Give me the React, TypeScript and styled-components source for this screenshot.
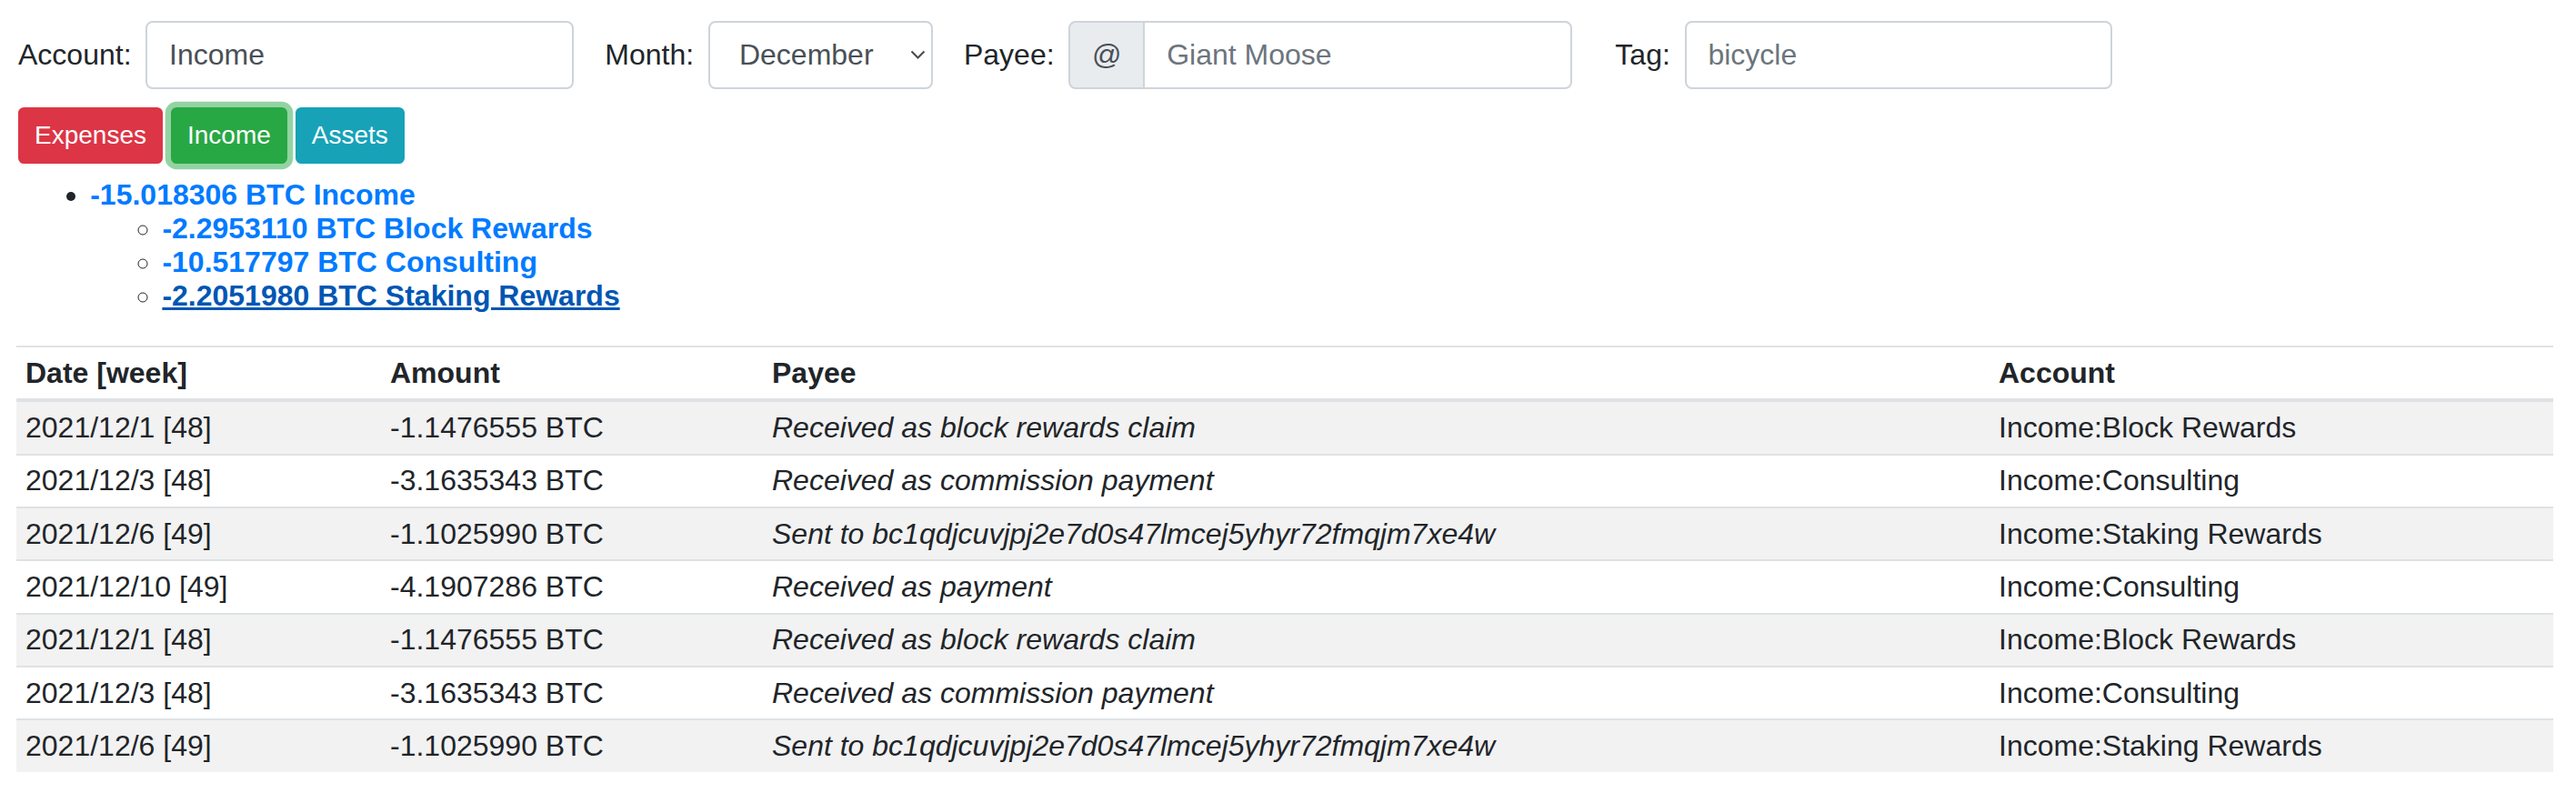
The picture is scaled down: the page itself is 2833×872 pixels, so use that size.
import React from "react";
import styled, { createGlobalStyle } from "styled-components";

const GlobalStyle = createGlobalStyle`
  html, body {
    margin: 0;
    padding: 0;
    background: #ffffff;
  }
  body {
    font-family: "Liberation Sans", Arial, Helvetica, sans-serif;
    font-size: 32px;
    line-height: normal;
    color: #212529;
  }
  * { box-sizing: border-box; }
`;

const Page = styled.div`
  padding: 22.7px 25px 0 20px;
`;

const FormRow = styled.div`
  display: flex;
  align-items: center;
  height: 75.2px;
`;

const FormGroup = styled.div<{ $gap: number }>`
  display: flex;
  align-items: center;
  margin-right: ${(p) => p.$gap}px;
`;

const Label = styled.label`
  margin-right: 15.8px;
  color: #212529;
  white-space: nowrap;
`;

const TextInput = styled.input<{ $w: number }>`
  width: ${(p) => p.$w}px;
  height: 75.2px;
  padding: 0 23.8px;
  font: inherit;
  color: #495057;
  background: #fff;
  border: 2px solid #ced4da;
  border-radius: 7.9px;
  outline: none;
  &::placeholder {
    color: #6c757d;
    opacity: 1;
  }
`;

const SelectWrap = styled.div`
  position: relative;
  width: 247px;
  height: 75.2px;
`;

const Select = styled.select`
  appearance: none;
  -webkit-appearance: none;
  width: 100%;
  height: 100%;
  padding: 0 40px 0 32px;
  font: inherit;
  color: #495057;
  background: #fff;
  border: 2px solid #ced4da;
  border-radius: 7.9px;
  outline: none;
`;

const Chevron = styled.svg`
  position: absolute;
  right: 8px;
  top: 32px;
  width: 17px;
  height: 11px;
  pointer-events: none;
`;

const InputGroup = styled.div`
  display: flex;
  width: 554px;
  height: 75.2px;
`;

const Prepend = styled.span`
  display: flex;
  align-items: center;
  justify-content: center;
  width: 84px;
  height: 100%;
  color: #495057;
  background: #e9ecef;
  border: 2px solid #ced4da;
  border-radius: 7.9px 0 0 7.9px;
  margin-right: -2px;
`;

const GroupInput = styled(TextInput)`
  flex: 1;
  border-radius: 0 7.9px 7.9px 0;
`;

const ButtonRow = styled.div`
  display: flex;
  gap: 9px;
  margin-top: 20.6px;
`;

const Button = styled.button<{ $bg: string; $focus?: boolean }>`
  height: 61.4px;
  padding: 0 16px;
  font-family: inherit;
  font-size: 28px;
  line-height: normal;
  color: #fff;
  background: ${(p) => p.$bg};
  border: 2px solid ${(p) => p.$bg};
  border-radius: 6.3px;
  box-shadow: ${(p) => (p.$focus ? "0 0 0 6.3px rgba(40,167,69,.5)" : "none")};
  cursor: pointer;
`;

const TreeList = styled.ul`
  margin: 16px 0 36px;
  padding-left: 79.2px;
  list-style: disc;
`;

const SubList = styled.ul`
  margin: 0;
  padding-left: 79.2px;
  list-style: circle;
`;

const TreeLink = styled.a<{ $hover?: boolean }>`
  font-weight: bold;
  color: ${(p) => (p.$hover ? "#0056b3" : "#007bff")};
  text-decoration: ${(p) => (p.$hover ? "underline" : "none")};
  cursor: pointer;
`;

const Table = styled.table`
  width: calc(100% + 2px);
  margin-left: -2px;
  border-collapse: collapse;
  table-layout: fixed;
  color: #212529;
`;

const HeadCell = styled.th`
  text-align: left;
  font-weight: bold;
  padding: 9.7px 10px;
  border-top: 2px solid #dee2e6;
  border-bottom: 4px solid #dee2e6;
  vertical-align: bottom;
`;

const Row = styled.tr<{ $striped: boolean }>`
  background: ${(p) => (p.$striped ? "rgba(0,0,0,.05)" : "transparent")};
`;

const Cell = styled.td<{ $italic?: boolean }>`
  padding: 9.7px 10px;
  border-top: 2px solid #dee2e6;
  vertical-align: top;
  white-space: nowrap;
  font-style: ${(p) => (p.$italic ? "italic" : "normal")};
`;

const months = [
  "January", "February", "March", "April", "May", "June",
  "July", "August", "September", "October", "November", "December",
];

const tx = [
  ["2021/12/1 [48]", "-1.1476555 BTC", "Received as block rewards claim", "Income:Block Rewards"],
  ["2021/12/3 [48]", "-3.1635343 BTC", "Received as commission payment", "Income:Consulting"],
  ["2021/12/6 [49]", "-1.1025990 BTC", "Sent to bc1qdjcuvjpj2e7d0s47lmcej5yhyr72fmqjm7xe4w", "Income:Staking Rewards"],
  ["2021/12/10 [49]", "-4.1907286 BTC", "Received as payment", "Income:Consulting"],
  ["2021/12/1 [48]", "-1.1476555 BTC", "Received as block rewards claim", "Income:Block Rewards"],
  ["2021/12/3 [48]", "-3.1635343 BTC", "Received as commission payment", "Income:Consulting"],
  ["2021/12/6 [49]", "-1.1025990 BTC", "Sent to bc1qdjcuvjpj2e7d0s47lmcej5yhyr72fmqjm7xe4w", "Income:Staking Rewards"],
];

const colWidths = [401, 420, 1349, 620];

export default function App() {
  return (
    <>
      <GlobalStyle />
      <Page>
        <FormRow>
          <FormGroup $gap={34}>
            <Label>Account:</Label>
            <TextInput $w={471} defaultValue="Income" />
          </FormGroup>
          <FormGroup $gap={34}>
            <Label>Month:</Label>
            <SelectWrap>
              <Select defaultValue="December">
                {months.map((m) => (
                  <option key={m}>{m}</option>
                ))}
              </Select>
              <Chevron viewBox="0 0 17 11">
                <path d="M1.5 1.5 L8.5 8.5 L15.5 1.5" fill="none" stroke="#4a4a4a" strokeWidth="2" />
              </Chevron>
            </SelectWrap>
          </FormGroup>
          <FormGroup $gap={47}>
            <Label>Payee:</Label>
            <InputGroup>
              <Prepend>@</Prepend>
              <GroupInput $w={472} placeholder="Giant Moose" />
            </InputGroup>
          </FormGroup>
          <FormGroup $gap={0}>
            <Label>Tag:</Label>
            <TextInput $w={470} placeholder="bicycle" />
          </FormGroup>
        </FormRow>

        <ButtonRow>
          <Button $bg="#dc3545">Expenses</Button>
          <Button $bg="#28a745" $focus>Income</Button>
          <Button $bg="#17a2b8">Assets</Button>
        </ButtonRow>

        <TreeList>
          <li>
            <TreeLink>-15.018306 BTC Income</TreeLink>
            <SubList>
              <li><TreeLink>-2.2953110 BTC Block Rewards</TreeLink></li>
              <li><TreeLink>-10.517797 BTC Consulting</TreeLink></li>
              <li><TreeLink $hover>-2.2051980 BTC Staking Rewards</TreeLink></li>
            </SubList>
          </li>
        </TreeList>

        <Table>
          <colgroup>
            {colWidths.map((w, i) => (
              <col key={i} style={{ width: w }} />
            ))}
          </colgroup>
          <thead>
            <tr>
              <HeadCell>Date [week]</HeadCell>
              <HeadCell>Amount</HeadCell>
              <HeadCell>Payee</HeadCell>
              <HeadCell>Account</HeadCell>
            </tr>
          </thead>
          <tbody>
            {tx.map((r, i) => (
              <Row key={i} $striped={i % 2 === 0}>
                <Cell>{r[0]}</Cell>
                <Cell>{r[1]}</Cell>
                <Cell $italic>{r[2]}</Cell>
                <Cell>{r[3]}</Cell>
              </Row>
            ))}
          </tbody>
        </Table>
      </Page>
    </>
  );
}
